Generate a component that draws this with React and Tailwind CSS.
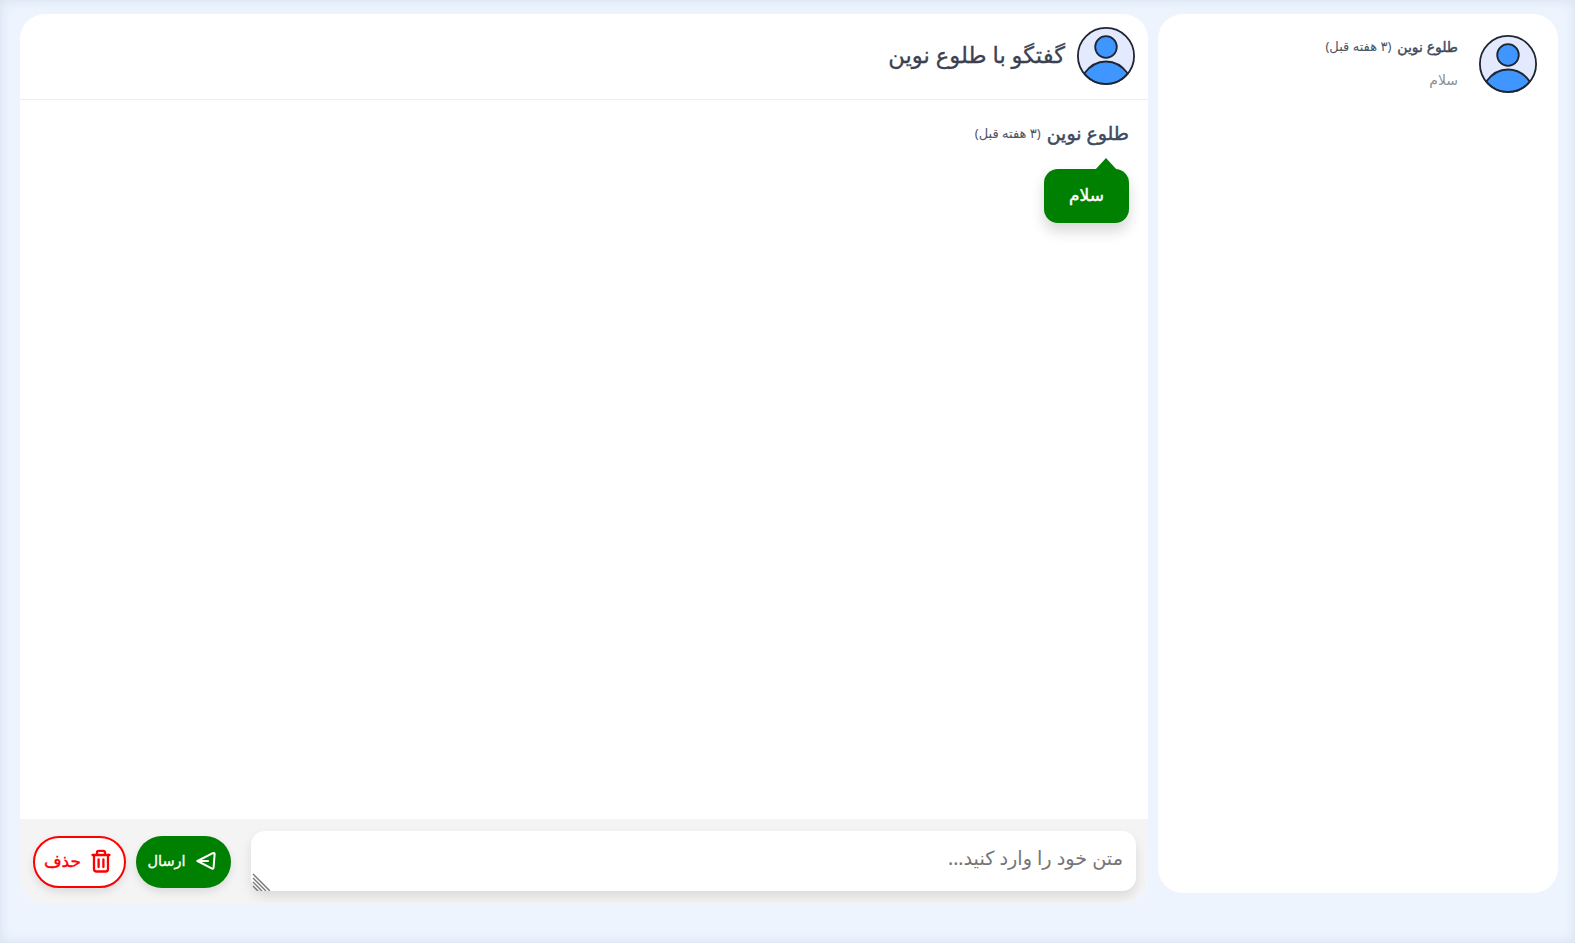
import React from "react";

function Avatar() {
  return (
    <svg width="58" height="58" viewBox="0 0 58 58" className="shrink-0">
      <circle cx="29" cy="29" r="28" fill="#e3eafd" />
      <path d="M7.2 46.5 C13 38.5 20 34.5 29 34.5 C38 34.5 45 38.5 50.8 46.5 A28 28 0 0 1 7.2 46.5 Z" fill="#4096ff" stroke="#1f2533" strokeWidth="1.8" />
      <circle cx="29" cy="20" r="10.8" fill="#4096ff" stroke="#1f2533" strokeWidth="1.8" />
      <circle cx="29" cy="29" r="28.1" fill="none" stroke="#1f2533" strokeWidth="1.8" />
    </svg>
  );
}

function SendIcon() {
  return (
    <svg width="20" height="20" viewBox="0 0 20 20" fill="none" stroke="#fff" strokeWidth="2" strokeLinejoin="round" strokeLinecap="round" className="shrink-0 -mt-[3px]">
      <path d="M1.5 10 L16.8 2.2 Q18.8 1.6 18.6 3.4 L17.6 16.4 Q17.3 18.4 15.6 17.4 Z" />
      <path d="M1.5 10 H12" />
    </svg>
  );
}

function TrashIcon() {
  return (
    <svg width="20" height="24" viewBox="0 0 20 24" fill="none" stroke="#ff0000" strokeWidth="2.3" strokeLinejoin="round" strokeLinecap="round" className="shrink-0 -mt-[2px]">
      <path d="M1.5 6 H18.5" />
      <path d="M6 5.5 V3.5 Q6 1.8 7.8 1.8 H12.2 Q14 1.8 14 3.5 V5.5" />
      <path d="M3 6 V20 Q3 22.5 5.5 22.5 H14.5 Q17 22.5 17 20 V6" />
      <path d="M7.6 10.5 V18" />
      <path d="M12.4 10.5 V18" />
    </svg>
  );
}

function ResizeHatch() {
  return (
    <svg width="18" height="18" viewBox="0 0 18 18" stroke="#7a7a7a" strokeWidth="1.4" className="absolute left-[1px] bottom-0">
      <path d="M1 1 L18 18 M1 5 L14 18 M1 9 L10 18 M1 13 L6 18" />
    </svg>
  );
}

export default function App() {
  return (
    <div
      dir="rtl"
      className="h-[943px] w-full overflow-hidden bg-[#edf4fe] shadow-[inset_0_0_12px_rgba(170,185,210,0.35)] pt-[14px] pr-[17px] pl-[20px] flex items-start gap-[10px] font-['Noto_Sans','DejaVu_Sans',sans-serif]"
    >
      <aside className="w-[400px] h-[879px] shrink-0 bg-white rounded-[25px] pt-[21px] pr-[21px] flex items-start gap-[21px]">
        <Avatar />
        <div className="pt-[1px]">
          <div className="flex items-center gap-[6px] h-[20px]">
            <span className="text-[14px] text-[#3f4a5f] [-webkit-text-stroke:0.4px_#3f4a5f]">طلوع نوین</span>
            <span className="text-[13px] pt-[1px] text-[#4b5563]">(۳ هفته قبل)</span>
          </div>
          <div className="mt-[13px] text-[14px] text-[#8b8f96]">سلام</div>
        </div>
      </aside>

      <main className="flex-1 h-[889px] bg-white rounded-[25px] overflow-hidden flex flex-col">
        <header className="h-[86px] shrink-0 border-b border-[#eeeeee] pr-[13px] pt-[13px] flex items-start gap-[12px]">
          <Avatar />
          <h1 className="text-[22.7px] leading-[56px] text-[#3c4150] [-webkit-text-stroke:0.3px_#3c4150]">گفتگو با طلوع نوین</h1>
        </header>

        <section className="flex-1 pt-[19px] pr-[19px]">
          <div className="flex items-center gap-[6px] h-[28px]">
            <span className="text-[19px] text-[#3f4a5f] [-webkit-text-stroke:0.5px_#3f4a5f]">طلوع نوین</span>
            <span className="text-[13px] pt-[1px] text-[#4b5563]">(۳ هفته قبل)</span>
          </div>
          <div className="relative mt-[22px] w-fit">
            <span className="absolute -top-[11px] right-[12px] w-0 h-0 border-x-[11px] border-x-transparent border-b-[12px] border-b-[#008000]" />
            <div className="w-[85px] h-[54px] rounded-[14px] bg-[#008000] shadow-[0_8px_14px_rgba(0,0,0,0.16)] flex items-center justify-center text-[17px] text-white [-webkit-text-stroke:0.4px_#ffffff]">
              <span className="-mt-[2px]">سلام</span>
            </div>
          </div>
        </section>

        <footer className="h-[84px] shrink-0 bg-[#f4f4f4] pr-[12px] pl-[13px] pt-[12px] flex items-start">
          <div className="relative w-[885px] h-[60px] shrink-0">
            <textarea
              dir="rtl"
              placeholder="متن خود را وارد کنید..."
              className="block resize-none w-full h-full rounded-[14px] bg-white pl-[14px] pr-[13px] py-[13px] text-[19.3px] leading-[28px] text-[#333] placeholder:text-[#757575] outline-none shadow-[0_6px_12px_rgba(0,0,0,0.1)]"
            />
            <ResizeHatch />
          </div>
          <div className="flex-1 flex items-start justify-between pt-[5px] pr-[20px]">
            <button className="w-[95px] h-[52px] rounded-full bg-[#008000] pr-[4px] shadow-[0_4px_8px_rgba(0,0,0,0.1)] flex items-center justify-center gap-[10px] text-[14.5px] text-white [-webkit-text-stroke:0.3px_#ffffff]">
              <SendIcon />
              <span className="-mt-[3px]">ارسال</span>
            </button>
            <button className="w-[93px] h-[52px] rounded-full bg-white border-2 border-[#ff0000] pr-[4px] shadow-[0_4px_8px_rgba(0,0,0,0.1)] flex items-center justify-center gap-[10px] text-[17px] text-[#ff0000] [-webkit-text-stroke:0.4px_#ff0000]">
              <TrashIcon />
              <span className="-mt-[3px]">حذف</span>
            </button>
          </div>
        </footer>
      </main>
    </div>
  );
}
